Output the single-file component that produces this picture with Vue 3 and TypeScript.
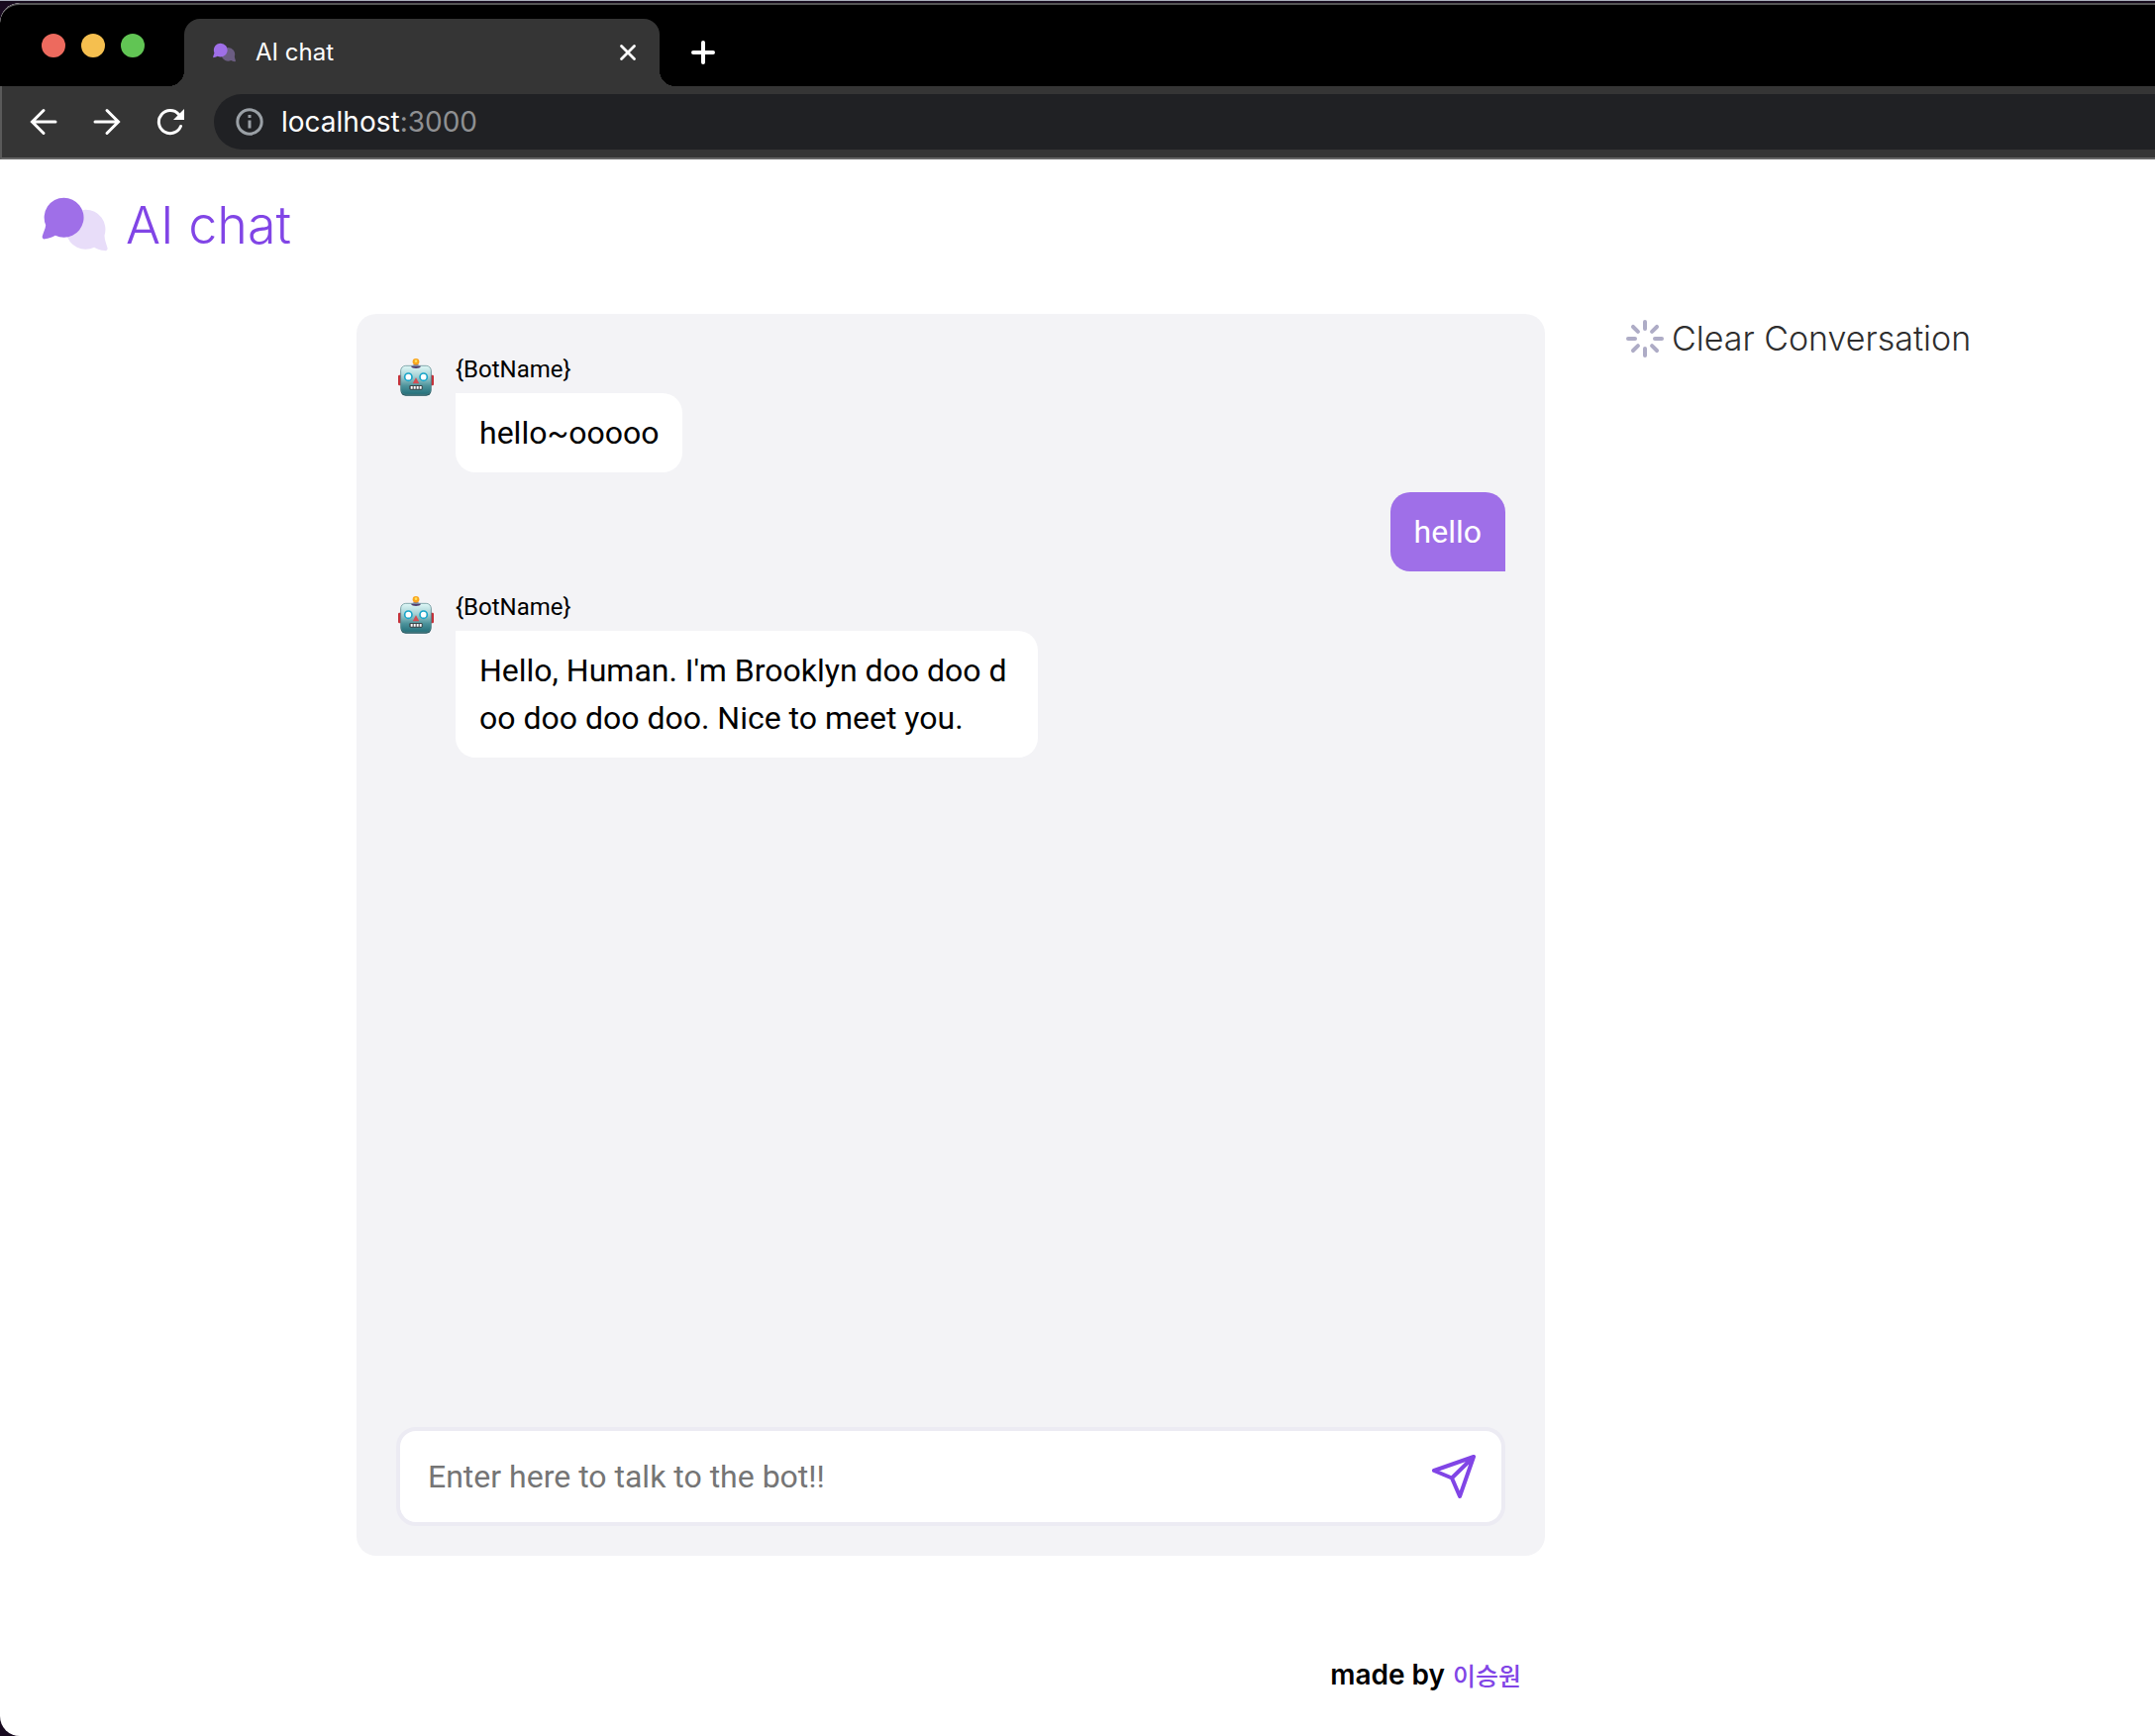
<script setup lang="ts">
import { ref } from 'vue'

interface Message {
  id: number
  from: 'bot' | 'user'
  text: string
}

const botName = '{BotName}'
const draft = ref('')
const messages = ref<Message[]>([
  { id: 1, from: 'bot', text: 'hello~ooooo' },
  { id: 2, from: 'user', text: 'hello' },
  { id: 3, from: 'bot', text: "Hello, Human. I'm Brooklyn doo doo doo doo doo doo. Nice to meet you." },
])
const spokes = [0, 45, 90, 135, 180, 225, 270, 315]

function send() {
  const text = draft.value.trim()
  if (!text) return
  messages.value.push({ id: messages.value.length + 1, from: 'user', text })
  draft.value = ''
}

function clearConversation() {
  messages.value = []
}
</script>

<template>
  <div class="desktop">
    <div class="wallpaper"></div>
    <div class="window">
      <div class="tabs">
        <div class="lights">
          <button class="light red" type="button" aria-label="Close window"></button>
          <button class="light yellow" type="button" aria-label="Minimize window"></button>
          <button class="light green" type="button" aria-label="Zoom window"></button>
        </div>
        <div class="tab">
          <svg class="favicon" viewBox="68 55 200 165" aria-hidden="true">
            <path fill="#6b5d82" d="M201 93a60 60 0 0 1 57 78c0 14 6 26 9 38c1 6-3 10-9 8c-11-1-22-5-31-10a60 60 0 1 1-26-114z" />
            <path fill="#9f6fe8" d="M135 57a60 60 0 1 1-26 114c-9 5-20 9-31 11c-6 1-10-3-8-9c3-12 9-20 10-33a60 60 0 0 1 55-83z" />
          </svg>
          <span class="tab-title">AI chat</span>
          <button class="icon-button" type="button" aria-label="Close tab">
            <svg width="20" height="20" viewBox="0 0 20 20"><path d="M3.500 3.500l13 13M16.500 3.500l-13 13" stroke="#fff" stroke-width="2.800" stroke-linecap="round" /></svg>
          </button>
        </div>
        <button class="icon-button new-tab" type="button" aria-label="New tab">
          <svg width="24" height="24" viewBox="0 0 24 24"><path d="M12 2v20M2 12h20" stroke="#fff" stroke-width="4" stroke-linecap="round" /></svg>
        </button>
      </div>

      <div class="toolbar">
        <button class="icon-button" type="button" aria-label="Back">
          <svg width="28" height="28" viewBox="0 0 28 28"><path d="M26 14H3M14 2.500L2.500 14L14 25.500" fill="none" stroke="#fff" stroke-width="3" stroke-linecap="round" /></svg>
        </button>
        <button class="icon-button" type="button" aria-label="Forward">
          <svg width="28" height="28" viewBox="0 0 28 28"><path d="M2 14h23M14 2.500L25.500 14L14 25.500" fill="none" stroke="#fff" stroke-width="3" stroke-linecap="round" /></svg>
        </button>
        <button class="icon-button" type="button" aria-label="Reload">
          <svg width="28" height="28" viewBox="0 0 28 28"><path d="M22.500 6.500A11.500 11.500 0 1 0 24.500 18.500" fill="none" stroke="#fff" stroke-width="3" stroke-linecap="round" /><path d="M28 1v11H17z" fill="#fff" /></svg>
        </button>
        <div class="address">
          <svg width="28" height="28" viewBox="0 0 28 28" aria-hidden="true"><circle cx="14" cy="14" r="12.200" fill="none" stroke="#9aa0a6" stroke-width="3" /><path d="M12.500 7h3v3h-3zM12.500 12.500h3v8h-3z" fill="#9aa0a6" /></svg>
          <span class="url">localhost<span class="port">:3000</span></span>
        </div>
      </div>

      <div class="page">
        <header class="header">
          <svg class="logo" viewBox="68 55 200 165" aria-hidden="true">
            <path fill="#e8ddf9" d="M201 93a60 60 0 0 1 57 78c0 14 6 26 9 38c1 6-3 10-9 8c-11-1-22-5-31-10a60 60 0 1 1-26-114z" />
            <path fill="#9f6fe8" d="M135 57a60 60 0 1 1-26 114c-9 5-20 9-31 11c-6 1-10-3-8-9c3-12 9-20 10-33a60 60 0 0 1 55-83z" />
          </svg>
          <h1 class="title">AI chat</h1>
        </header>

        <main class="main">
          <section class="panel">
            <ul class="messages">
              <li v-for="message in messages" :key="message.id" class="message" :class="message.from">
                <svg v-if="message.from === 'bot'" class="robot" viewBox="20 35 110 114" aria-hidden="true">
                  <defs>
                    <linearGradient :id="`robot-face-${message.id}`" x1="0" y1="0" x2="0" y2="1">
                      <stop offset="0" stop-color="#dff8f7" />
                      <stop offset="0.350" stop-color="#a9d3d6" />
                      <stop offset="0.700" stop-color="#4d939b" />
                      <stop offset="1" stop-color="#236f7a" />
                    </linearGradient>
                  </defs>
                  <rect x="21" y="85" width="12" height="32" rx="4" fill="#c4323b" />
                  <rect x="117" y="85" width="12" height="32" rx="4" fill="#c4323b" />
                  <path d="M62 62c0-12 26-12 26 0z" fill="#67518d" />
                  <circle cx="75" cy="45" r="10" fill="#f9a51e" />
                  <circle cx="75" cy="43" r="4" fill="#ffe25a" />
                  <rect x="29" y="58" width="92" height="90" rx="15" fill="#164f59" />
                  <rect x="29" y="57" width="92" height="87" rx="15" :fill="`url(#robot-face-${message.id})`" stroke="#5f8b90" stroke-width="2" />
                  <path d="M60 58c2 9 28 9 30 0z" fill="#513f70" />
                  <circle cx="52" cy="91" r="11" fill="#fff" stroke="#19a5c9" stroke-width="5" />
                  <circle cx="98" cy="91" r="11" fill="#fff" stroke="#19a5c9" stroke-width="5" />
                  <path d="M75 93l10 18H65z" fill="#d54c52" />
                  <rect x="55" y="116" width="40" height="14" rx="4" fill="#3c4448" />
                  <path d="M59 119h6v8h-6zM68 119h6v8h-6zM77 119h6v8h-6zM86 119h6v8h-6z" fill="#fff" />
                </svg>
                <div class="message-body">
                  <span v-if="message.from === 'bot'" class="name">{{ botName }}</span>
                  <p class="bubble">{{ message.text }}</p>
                </div>
              </li>
            </ul>
            <form class="composer" @submit.prevent="send">
              <input v-model="draft" class="field" type="text" aria-label="Message" placeholder="Enter here to talk to the bot!!" />
              <button class="icon-button" type="submit" aria-label="Send">
                <svg width="44" height="44" viewBox="0 0 44 44"><path d="M42 2L2 16L20 23.500L28 42ZM42 2L20 23.500" fill="none" stroke="#8145e6" stroke-width="4" stroke-linejoin="round" /></svg>
              </button>
            </form>
          </section>
          <aside class="side">
            <button class="clear" type="button" @click="clearConversation">
              <svg width="38" height="38" viewBox="-19 -19 38 38" aria-hidden="true">
                <path v-for="angle in spokes" :key="angle" d="M0-17v7" :transform="`rotate(${angle})`" stroke="#aeacc6" stroke-width="4" stroke-linecap="round" />
              </svg>
              <span>Clear Conversation</span>
            </button>
          </aside>
        </main>

        <footer class="footer">
          <span>made by</span>
          <a class="author" href="#">이승원</a>
        </footer>
      </div>
    </div>
  </div>
</template>

<style>
body {
  margin: 0;
}
</style>

<style scoped>
.desktop {
  display: flex;
  flex-direction: column;
  min-height: 100vh;
  background: #180a1f;
  font-family: Roboto, "Noto Sans CJK KR", sans-serif;
}
.wallpaper {
  height: 1px;
  border-bottom: 2px solid #150a1b;
  background: #aaaebb;
}
.window {
  flex: 1;
  display: flex;
  flex-direction: column;
  overflow: hidden;
  border-radius: 20px 0 0 20px;
  background: #fff;
}
button {
  padding: 0;
  border: 0;
  background: none;
  cursor: pointer;
}
svg {
  display: block;
  flex: none;
}
.icon-button {
  flex: none;
}
.tabs {
  display: flex;
  align-items: flex-end;
  height: 82px;
  border-top: 2px solid #555;
  border-radius: 20px 0 0 0;
  background: #000;
}
.lights {
  display: flex;
  gap: 16px;
  box-sizing: border-box;
  width: 186px;
  height: 68px;
  padding: 15px 0 0 42px;
}
.light {
  width: 24px;
  height: 24px;
  border-radius: 50%;
}
.red {
  background: #ed6a5e;
}
.yellow {
  background: #f5bf4f;
}
.green {
  background: #61c554;
}
.tab {
  position: relative;
  display: flex;
  align-items: center;
  box-sizing: border-box;
  width: 480px;
  height: 68px;
  padding: 0 22px 0 29px;
  border-radius: 16px 16px 0 0;
  background: #353535;
}
.tab::before,
.tab::after {
  content: "";
  position: absolute;
  bottom: 0;
  width: 16px;
  height: 16px;
}
.tab::before {
  right: 100%;
  background: radial-gradient(circle at 0 0, #000 16px, #353535 16px);
}
.tab::after {
  left: 100%;
  background: radial-gradient(circle at 100% 0, #000 16px, #353535 16px);
}
.favicon {
  width: 23px;
  height: 20px;
}
.tab-title {
  flex: 1;
  padding-left: 20px;
  color: #fff;
  font: 400 24px/32px Inter, sans-serif;
}
.new-tab {
  margin: 0 0 22px 32px;
}
.toolbar {
  display: flex;
  align-items: center;
  gap: 36px;
  height: 72px;
  padding-left: 28px;
  border-bottom: 2px solid #666;
  border-left: 2px solid #5a5a5a;
  background: #353535;
}
.address {
  flex: 1;
  display: flex;
  align-items: center;
  gap: 18px;
  height: 56px;
  margin-left: -6px;
  padding-left: 22px;
  border-radius: 28px 0 0 28px;
  background: #202124;
}
.url {
  color: #fff;
  font: 400 28px/40px Inter, sans-serif;
}
.port {
  color: #8f9092;
}
.page {
  flex: 1;
  display: flex;
  flex-direction: column;
}
.header {
  display: flex;
  align-items: center;
  gap: 18px;
  height: 130px;
  padding: 0 42px;
  margin-bottom: 26px;
}
.logo {
  width: 67px;
  height: 55px;
}
.title {
  margin: 0;
  padding-top: 4px;
  color: #8145e6;
  font: 300 52px/64px Inter, sans-serif;
}
.main {
  flex: 1;
  display: grid;
  grid-template-columns: 360px minmax(0, 1fr) 616px;
}
.panel {
  grid-column: 2;
  display: flex;
  flex-direction: column;
  padding: 40px 40px 30px;
  border-radius: 20px;
  background: #f3f3f6;
}
.messages {
  flex: 1;
  display: flex;
  flex-direction: column;
  gap: 20px;
  margin: 0;
  padding: 0;
  list-style: none;
}
.message {
  display: flex;
}
.user {
  justify-content: flex-end;
}
.robot {
  width: 38px;
  height: 38px;
  margin: 5px 21px 0 1px;
}
.message-body {
  display: flex;
  flex-direction: column;
  align-items: flex-start;
}
.name {
  margin-bottom: 8px;
  font-size: 24px;
  line-height: 32px;
}
.bubble {
  box-sizing: border-box;
  max-width: 588px;
  margin: 0;
  padding: 16px 24px;
  border-radius: 0 20px 20px 20px;
  background: #fff;
  color: #000;
  font-size: 32px;
  line-height: 48px;
  word-break: break-all;
}
.user .bubble {
  border-radius: 20px 20px 0 20px;
  background: #9f6fe8;
  color: #fff;
}
.composer {
  display: flex;
  align-items: center;
  height: 92px;
  padding: 0 26px 0 28px;
  border: 4px solid #ecebf3;
  border-radius: 20px;
  background: #fff;
}
.field {
  flex: 1;
  min-width: 0;
  padding: 0;
  border: 0;
  outline: 0;
  background: none;
  font: 400 32px/48px Roboto, sans-serif;
}
.field::placeholder {
  color: #757575;
  opacity: 1;
}
.side {
  padding-left: 82px;
}
.clear {
  display: flex;
  align-items: center;
  gap: 8px;
  height: 50px;
  color: #2e2e2e;
  font: 300 34px/48px Inter, sans-serif;
}
.footer {
  display: flex;
  justify-content: flex-end;
  align-items: center;
  gap: 8px;
  box-sizing: border-box;
  height: 182px;
  padding: 58px 640px 0 0;
  font: 600 28px/40px Inter, sans-serif;
}
.author {
  color: #8145e6;
  font: 500 25px/40px "Noto Sans CJK KR", sans-serif;
  text-decoration: none;
}
</style>
